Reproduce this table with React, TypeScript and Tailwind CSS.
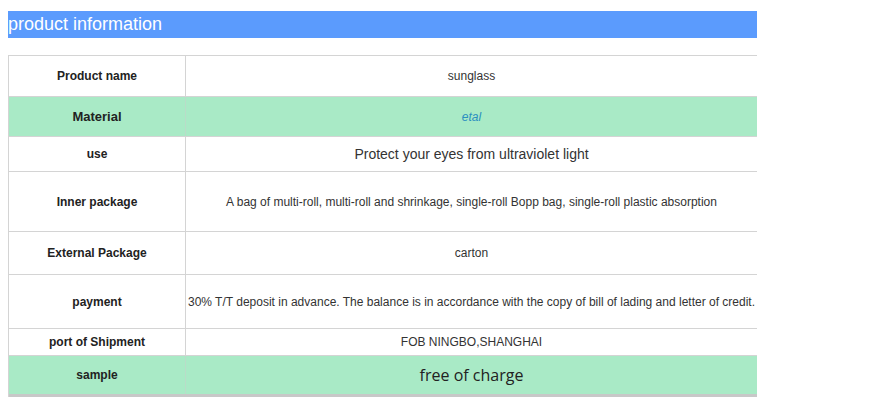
import React from "react";

const rows: { label: string; value: React.ReactNode; h: string; green?: boolean; valueClass?: string; labelClass?: string }[] = [
  { label: "Product name", value: "sunglass", h: "h-[40px]" },
  { label: "Material", value: "etal", h: "h-[40px]", green: true, valueClass: "text-[12px] italic text-[#2b8fc0]", labelClass: "text-[13px]" },
  { label: "use", value: "Protect your eyes from ultraviolet light", h: "h-[35px]", valueClass: "text-[14px] text-[#333]" },
  { label: "Inner package", value: "A bag of multi-roll, multi-roll and shrinkage, single-roll Bopp bag, single-roll plastic absorption", h: "h-[60px]" },
  { label: "External Package", value: "carton", h: "h-[43px]" },
  { label: "payment", value: "30% T/T deposit in advance. The balance is in accordance with the copy of bill of lading and letter of credit.", h: "h-[54px]" },
  { label: "port of Shipment", value: "FOB NINGBO,SHANGHAI", h: "h-[27px]" },
  { label: "sample", value: "free of charge", h: "h-[39px]", green: true, valueClass: "text-[16px] text-[#222] font-['Open_Sans',sans-serif]" },
];

export default function App() {
  return (
    <div className="w-[889px] h-[397px] bg-white overflow-hidden font-['Liberation_Sans',Arial,sans-serif]">
      <div className="pt-[11px] pl-[8px]">
        <div className="w-[749px] h-[27px] bg-[#5b9bfd] text-white text-[18px] leading-[27px]">
          product information
        </div>
      </div>
      <div className="mt-[17px] ml-[8px] w-[749px] border-t border-l border-[#d4d4d4]">
        {rows.map((r, i) => (
          <div
            key={i}
            className={`flex ${r.h} ${i > 0 ? "border-t border-[#d4d4d4]" : ""} ${r.green ? "bg-[#a9eac6]" : ""}`}
          >
            <div
              className={`w-[177px] shrink-0 flex items-center justify-center font-bold text-[#222] border-r ${r.labelClass ?? "text-[12px]"} ${r.green ? "border-[#b9dcc8]" : "border-[#d4d4d4]"}`}
            >
              {r.label}
            </div>
            <div
              className={`flex-1 flex items-center justify-center text-center whitespace-nowrap ${r.valueClass ?? "text-[12px] text-[#333]"}`}
            >
              {r.value}
            </div>
          </div>
        ))}
        <div className="h-[3px] bg-[#c8c8c8]" />
      </div>
    </div>
  );
}
